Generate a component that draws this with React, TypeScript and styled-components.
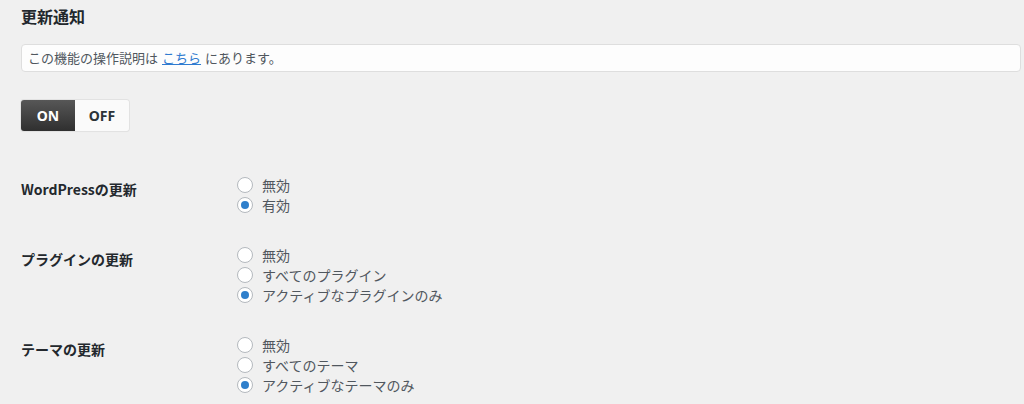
import React from "react";
import styled, { createGlobalStyle } from "styled-components";

const Global = createGlobalStyle`
  html, body { margin: 0; padding: 0; background: #f0f0f0; }
  body { font-family: "Noto Sans CJK JP", "Noto Sans", sans-serif; color: #1d2327; }
  * { box-sizing: border-box; }
`;

const Page = styled.div`
  padding: 6px 3px 0 21px;
  width: 1024px;
`;

const Title = styled.h2`
  margin: 0;
  font-size: 16px;
  line-height: 20px;
  font-weight: 700;
  color: #23282d;
`;

const Notice = styled.div`
  margin-top: 18px;
  height: 28px;
  background: #fdfdfd;
  border: 1px solid #dedede;
  border-radius: 4px;
  padding: 0 6px;
  font-size: 13px;
  line-height: 26px;
  color: #50575e;
`;

const Link = styled.a`
  color: #2f7bd0;
  text-decoration: underline;
  margin: 0 4px;
`;

const Toggle = styled.div`
  margin-top: 28px;
  display: inline-flex;
  height: 31px;
  border-radius: 3px;
  box-shadow: 0 0 0 1px #e2e2e2, 0 1px 1px rgba(0,0,0,0.06);
  overflow: hidden;
`;

const ToggleBtn = styled.button<{ $active?: boolean }>`
  width: 54px;
  height: 31px;
  border: 0;
  margin: 0;
  padding: 0;
  font-family: "Noto Sans", "Noto Sans CJK JP", sans-serif;
  font-size: 14px;
  font-weight: 700;
  color: ${(p) => (p.$active ? "#ffffff" : "#2c3338")};
  background: ${(p) =>
    p.$active ? "linear-gradient(#575757, #2f2f2f)" : "#fafafa"};
`;

const Table = styled.div`
  margin-top: 44px;
  display: flex;
  flex-direction: column;
`;

const Row = styled.div`
  display: flex;
  padding-bottom: 30px;
`;

const RowLabel = styled.div`
  width: 216px;
  padding-top: 4px;
  font-size: 14px;
  line-height: 20px;
  font-weight: 700;
  color: #23282d;
`;

const Options = styled.div`
  display: flex;
  flex-direction: column;
`;

const Option = styled.label`
  display: flex;
  align-items: center;
  gap: 9px;
  height: 20px;
  font-size: 14px;
  color: #50575e;
`;

const Radio = styled.input.attrs({ type: "radio" })`
  appearance: none;
  margin: 0;
  width: 16px;
  height: 16px;
  border-radius: 50%;
  border: 1px solid #b4b9be;
  background: #fff;
  display: grid;
  place-items: center;
  &:checked::before {
    content: "";
    width: 8px;
    height: 8px;
    border-radius: 50%;
    background: #2f7fcb;
  }
`;

const groups = [
  { name: "wp", label: "WordPressの更新", options: ["無効", "有効"], checked: 1 },
  {
    name: "plugin",
    label: "プラグインの更新",
    options: ["無効", "すべてのプラグイン", "アクティブなプラグインのみ"],
    checked: 2,
  },
  {
    name: "theme",
    label: "テーマの更新",
    options: ["無効", "すべてのテーマ", "アクティブなテーマのみ"],
    checked: 2,
  },
];

export default function App() {
  return (
    <Page>
      <Global />
      <Title>更新通知</Title>
      <Notice>
        この機能の操作説明は<Link href="#">こちら</Link>にあります。
      </Notice>
      <Toggle>
        <ToggleBtn $active>ON</ToggleBtn>
        <ToggleBtn>OFF</ToggleBtn>
      </Toggle>
      <Table>
        {groups.map((g) => (
          <Row key={g.name}>
            <RowLabel>{g.label}</RowLabel>
            <Options>
              {g.options.map((o, i) => (
                <Option key={o}>
                  <Radio name={g.name} defaultChecked={i === g.checked} />
                  {o}
                </Option>
              ))}
            </Options>
          </Row>
        ))}
      </Table>
    </Page>
  );
}
